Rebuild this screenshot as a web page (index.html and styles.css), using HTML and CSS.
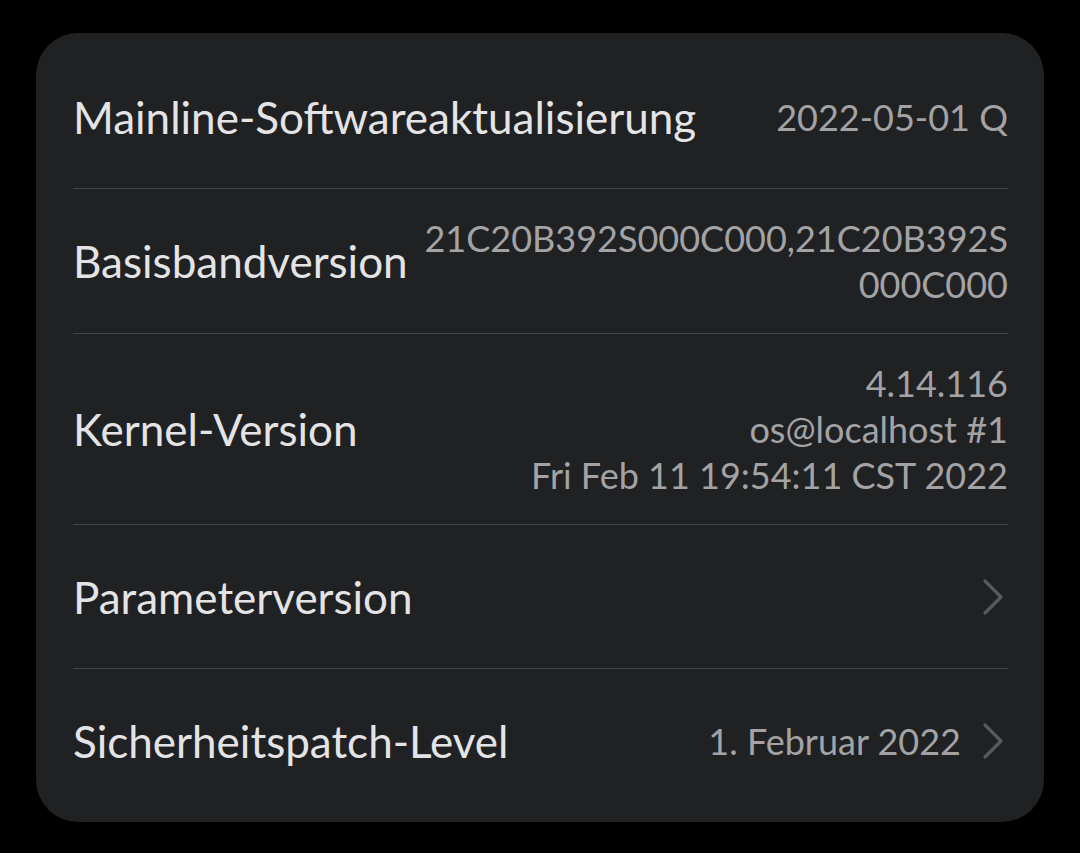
FILE: index.html
```html
<!DOCTYPE html>
<html lang="de">
<head>
  <meta charset="UTF-8" />
  <meta name="viewport" content="width=device-width, initial-scale=1.0" />
  <title>Über das Telefon</title>
  <link rel="stylesheet" href="styles.css">
</head>
<body>
  <div class="card">
    <div class="row">
      <span class="label">Mainline-Softwareaktualisierung</span>
      <span class="value">2022-05-01 Q</span>
    </div>
    <div class="row">
      <span class="label">Basisbandversion</span>
      <span class="value">21C20B392S000C000,21C20B392S<br>000C000</span>
    </div>
    <div class="row">
      <span class="label">Kernel-Version</span>
      <span class="value">4.14.116<br>os@localhost #1<br>Fri Feb 11 19:54:11 CST 2022</span>
    </div>
    <div class="row">
      <span class="label">Parameterversion</span>
      <span class="value">
        <svg class="chev" width="24" height="38" viewBox="0 0 24 38"><path d="M4 3 L20 19 L4 35" fill="none" stroke="#58595b" stroke-width="3.2" stroke-linecap="round" stroke-linejoin="round"/></svg>
      </span>
    </div>
    <div class="row">
      <span class="label">Sicherheitspatch-Level</span>
      <span class="value">1. Februar 2022
        <svg class="chev" width="24" height="38" viewBox="0 0 24 38"><path d="M4 3 L20 19 L4 35" fill="none" stroke="#58595b" stroke-width="3.2" stroke-linecap="round" stroke-linejoin="round"/></svg>
      </span>
    </div>
  </div>
</body>
</html>
```

FILE: styles.css
```css
body { margin: 0; background: #000; font-family: 'Lato', sans-serif; }
.card { margin: 33px 36px 0 36px; width: 1008px; height: 789px; box-sizing: border-box; background: #202123; border-radius: 42px; padding: 12px 36px 0 37px; }
.row { display: flex; justify-content: space-between; align-items: center; min-height: 144px; box-sizing: border-box; padding: 26px 0; border-bottom: 1px solid #444547; }
.row:last-child { border-bottom: none; }
.label { color: #e4e4e6; font-size: 44px; white-space: nowrap; }
.value { color: #a3a3a5; font-size: 36px; line-height: 46px; text-align: right; display: flex; align-items: center; gap: 20px; }
.chev { display: block; margin-right: 3px; }
```
